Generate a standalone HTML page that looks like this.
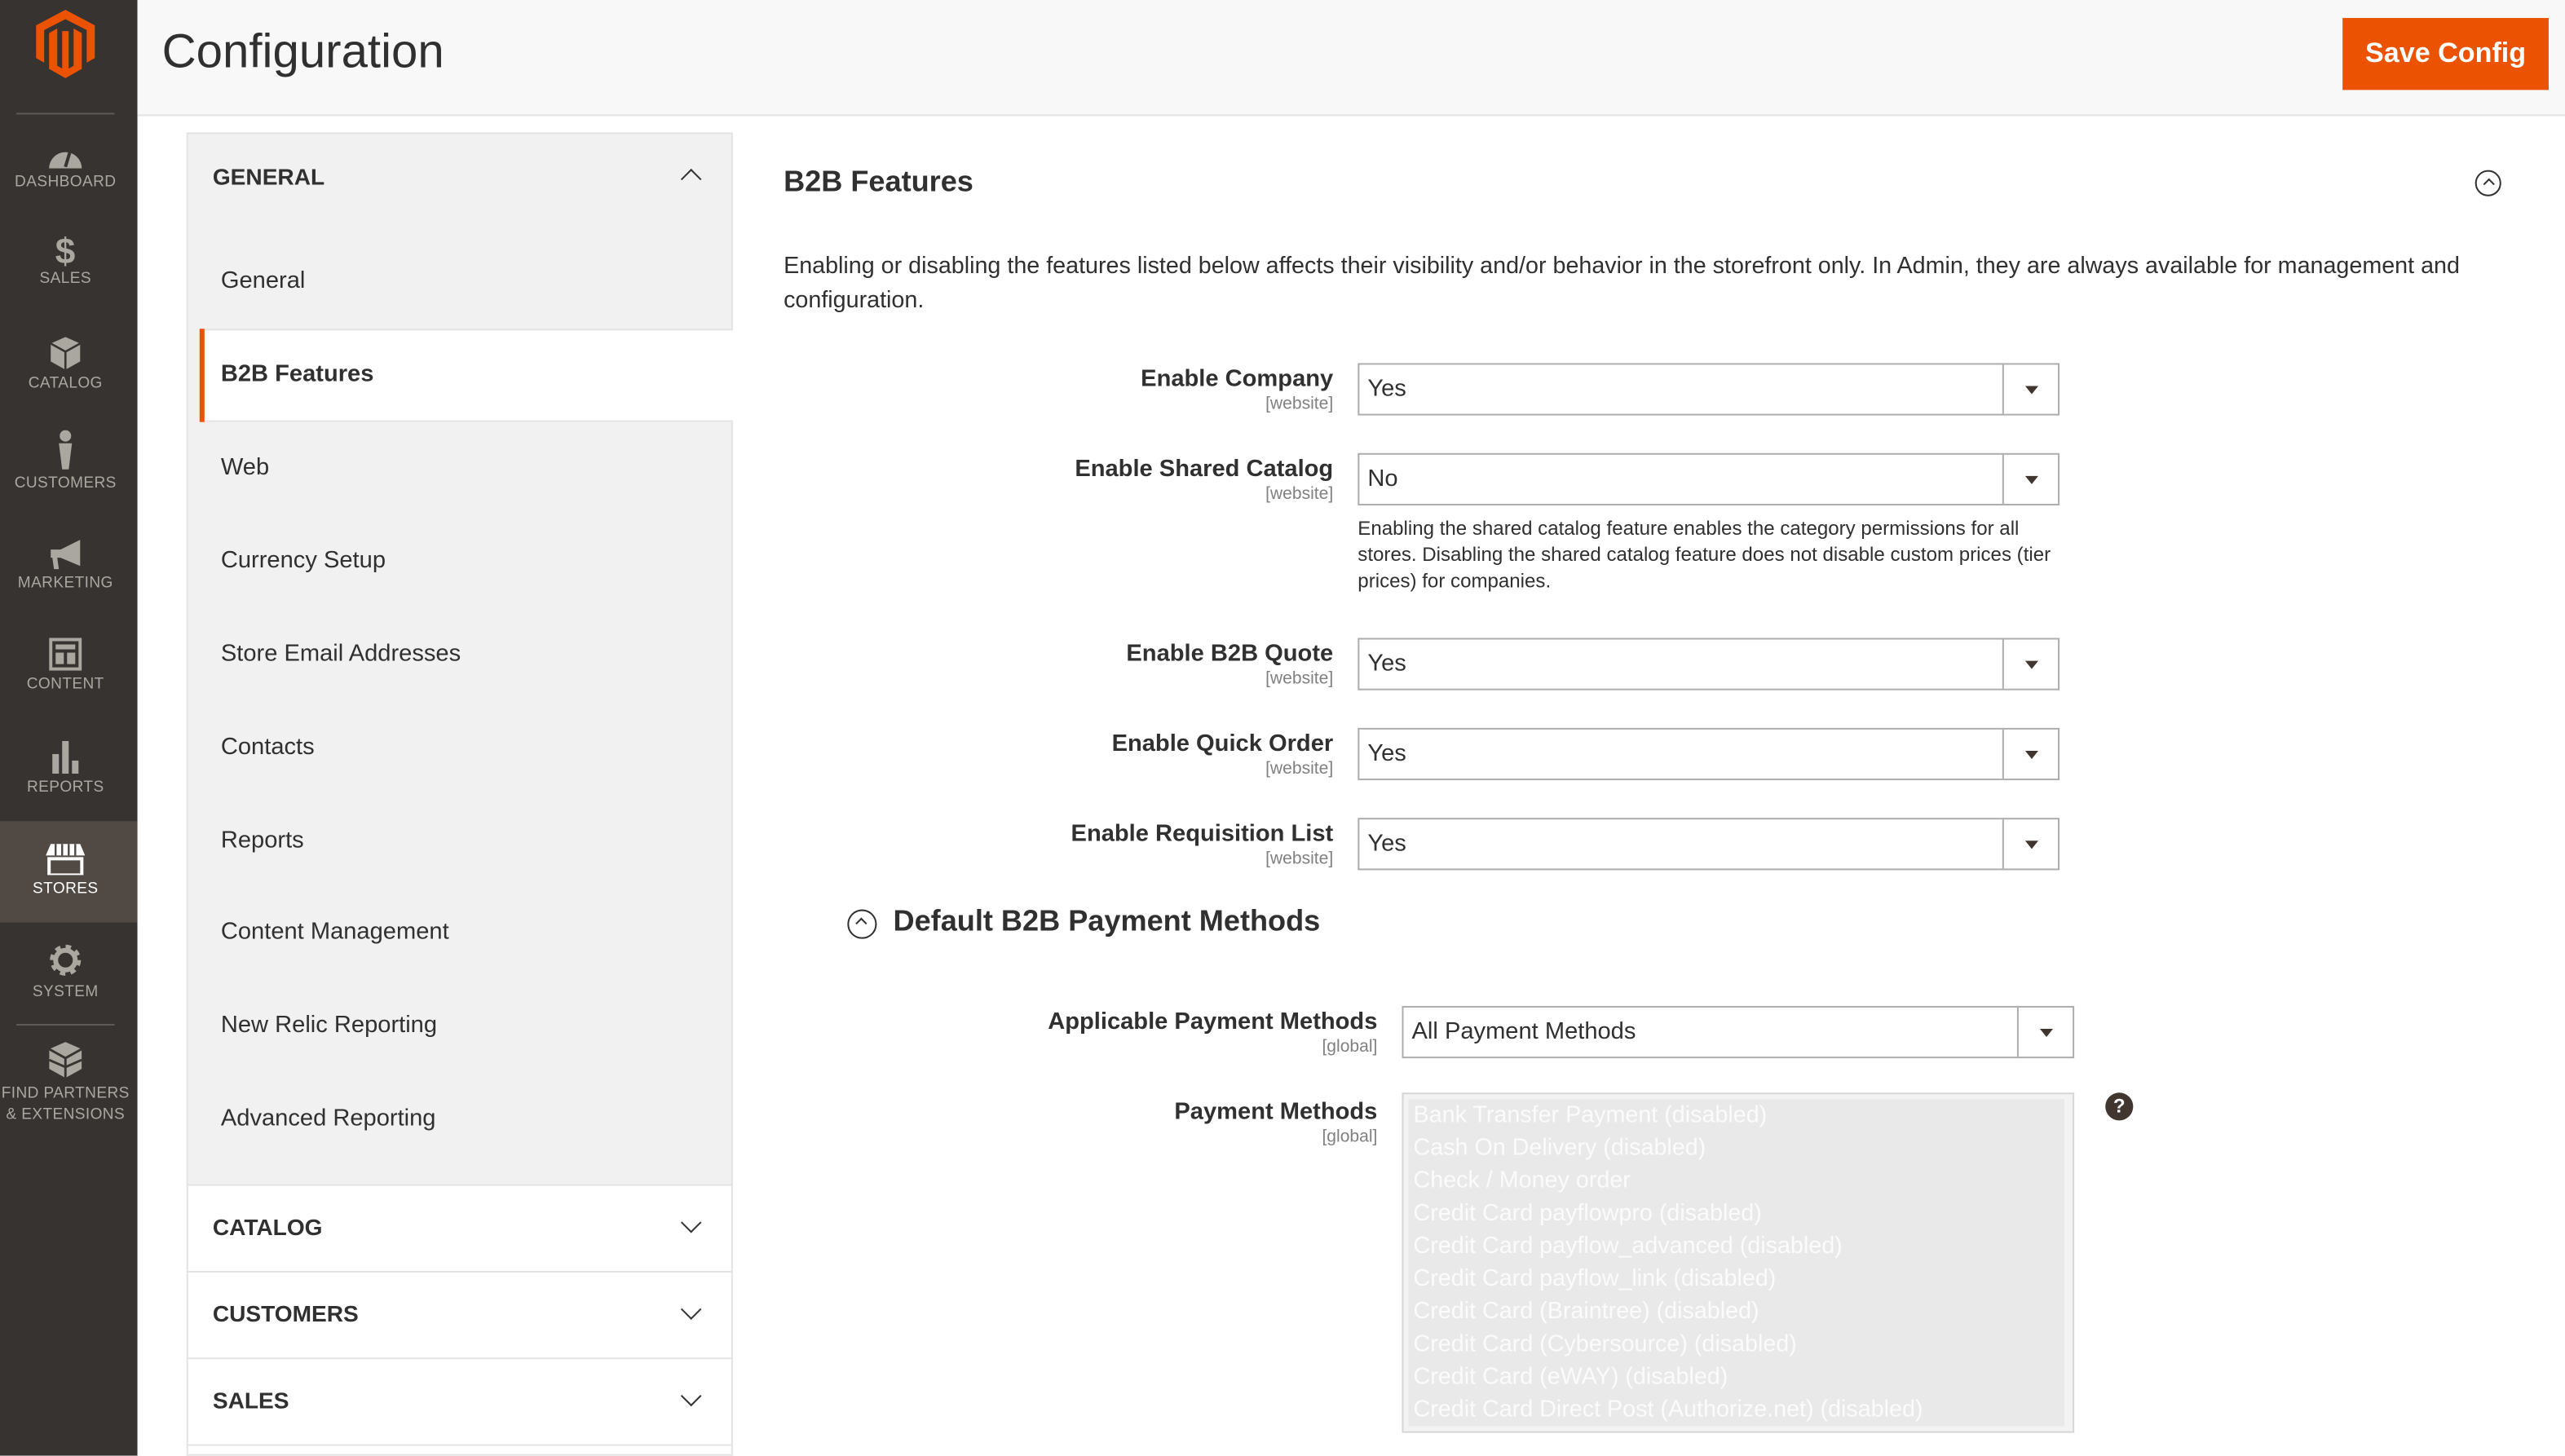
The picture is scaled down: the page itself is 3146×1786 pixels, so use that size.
<!DOCTYPE html>
<html><head><meta charset="utf-8">
<style>
html,body{margin:0;padding:0;background:#fff;overflow:hidden;width:3146px;height:1786px}
#w{position:absolute;left:0;top:0;width:1568px;height:890px;overflow:hidden;transform:scale(2.0064,2.0064);transform-origin:0 0;font-family:"Liberation Sans",sans-serif;color:#303030}
.a{position:absolute}
#side{left:0;top:0;width:84px;height:890px;background:#373330}
.mi{position:absolute;left:0;width:80px;text-align:center;color:#aaa6a0;font-size:9.5px;letter-spacing:.2px}
.mi svg{display:block;margin:0 auto 3px}
#hdr{left:84px;top:0;width:1484px;height:70px;background:#f8f8f8;border-bottom:1px solid #e3e3e3}
.nav{left:114px;width:334px;background:#f1f1f1;border:1px solid #e3e3e3;box-sizing:border-box}
.it{position:absolute;left:135px;font-size:14.5px;color:#303030}
.sec{position:absolute;left:114px;width:334px;height:53px;border:1px solid #e3e3e3;border-top:none;box-sizing:border-box;background:#fff}
.sec b{position:absolute;left:15px;top:17px;font-size:14px}
.chev{position:absolute;right:20px;top:18px;width:8px;height:8px;border-right:1.5px solid #333;border-bottom:1.5px solid #333;transform:rotate(45deg)}
.lab{position:absolute;text-align:right;font-size:14.5px;font-weight:bold;color:#303030}
.lab small{display:block;font-size:10.5px;font-weight:normal;color:#808080;margin-top:1px}
.sel{position:absolute;height:32px;border:1px solid #adadad;box-sizing:border-box;background:#fff;font-size:14.5px;line-height:30px;padding-left:5px;color:#303030}
.sel:after{content:"";position:absolute;right:0;top:0;width:33px;height:30px;border-left:1px solid #adadad}
.sel i{position:absolute;right:12px;top:13px;width:0;height:0;border-left:4.5px solid transparent;border-right:4.5px solid transparent;border-top:5px solid #41362f;z-index:2}
.circ{position:absolute;width:16px;height:16px;border:1.3px solid #303030;border-radius:50%;box-sizing:border-box}
.circ:after{content:"";position:absolute;left:4.5px;top:5px;width:4px;height:4px;border-left:1.3px solid #303030;border-top:1.3px solid #303030;transform:rotate(45deg)}
</style></head><body><div id="w">
<div id="side" class="a">
 <svg class="a" style="left:22px;top:6px" width="36" height="42" viewBox="0 0 36 42"><path d="M18 0 L36 10 V31 L31 34 V13 L18 6 L5 13 V34 L0 31 V10 Z M8 15 L13 12 V36 L18 39 L23 36 V12 L28 15 V38 L18 44 L8 38 Z" fill="#eb5202" transform="scale(1,0.95)"/><path d="M16 13 h4 v25 l-2 1 -2 -1z" fill="#eb5202"/></svg>
 <div class="a" style="left:10px;top:69px;width:60px;height:1px;background:#5f5a55"></div>
 <div class="mi" style="top:86px"><svg width="22" height="17" viewBox="0 0 22 17"><path d="M1 17 A10 10 0 0 1 21 17Z" fill="#aaa6a0"/><path d="M11 16 L14 6" stroke="#373330" stroke-width="2"/></svg>DASHBOARD</div>
 <div class="mi" style="top:143px"><div style="font-size:22px;font-weight:bold;line-height:22px">$</div>SALES</div>
 <div class="mi" style="top:206px"><svg width="20" height="20" viewBox="0 0 20 20"><path d="M10 0 L19 4 V15 L10 20 L1 15 V4Z" fill="#aaa6a0"/><path d="M1 4 L10 9 L19 4 M10 9 V20" stroke="#373330" stroke-width="1.3" fill="none"/></svg>CATALOG</div>
 <div class="mi" style="top:263px"><svg width="10" height="24" viewBox="0 0 10 24"><circle cx="5" cy="3.5" r="3.5" fill="#aaa6a0"/><path d="M1 8 H9 L8 16 L7 24 H3 L2 16Z" fill="#aaa6a0"/></svg>CUSTOMERS</div>
 <div class="mi" style="top:330px"><svg width="22" height="18" viewBox="0 0 22 18"><path d="M2 6 H8 L20 0 V16 L8 11 H6 L7 18 H4 L3 11 H2Z" fill="#aaa6a0"/></svg>MARKETING</div>
 <div class="mi" style="top:390px"><svg width="20" height="20" viewBox="0 0 20 20"><rect x="1" y="1" width="18" height="18" fill="none" stroke="#aaa6a0" stroke-width="2"/><rect x="4" y="4" width="12" height="3" fill="#aaa6a0"/><rect x="4" y="9" width="5" height="7" fill="#aaa6a0"/><rect x="11" y="9" width="5" height="7" fill="#aaa6a0"/></svg>CONTENT</div>
 <div class="mi" style="top:453px"><svg width="20" height="20" viewBox="0 0 20 20"><rect x="2" y="8" width="4" height="12" fill="#aaa6a0"/><rect x="8" y="0" width="4" height="20" fill="#aaa6a0"/><rect x="14" y="12" width="4" height="8" fill="#aaa6a0"/></svg>REPORTS</div>
 <div class="a" style="left:0;top:502px;width:84px;height:62px;background:#514943"></div>
 <div class="mi" style="top:515px;color:#fff"><svg width="24" height="20" viewBox="0 0 24 20"><path d="M3 1 H21 L24 8 H0Z" fill="#fff"/><rect x="2" y="10" width="20" height="10" fill="none" stroke="#fff" stroke-width="2"/><path d="M6 1 V8 M10 1 V8 M14 1 V8 M18 1 V8" stroke="#514943" stroke-width="1.2"/></svg>STORES</div>
 <div class="mi" style="top:576px"><svg width="22" height="22" viewBox="0 0 22 22"><circle cx="11" cy="11" r="7.5" fill="none" stroke="#aaa6a0" stroke-width="4" stroke-dasharray="3 2.9"/><circle cx="11" cy="11" r="6" fill="none" stroke="#aaa6a0" stroke-width="3"/></svg>SYSTEM</div>
 <div class="a" style="left:10px;top:626px;width:60px;height:1px;background:#5f5a55"></div>
 <div class="mi" style="top:637px;line-height:13px"><svg width="22" height="22" viewBox="0 0 20 20"><path d="M10 0 L19 4 V15 L10 20 L1 15 V4Z" fill="#aaa6a0"/><path d="M1 4 L10 9 L19 4 M10 9 V20 M1 10 L10 14 L19 10" stroke="#373330" stroke-width="1.3" fill="none"/></svg>FIND PARTNERS<br>&amp; EXTENSIONS</div>
</div>
<div id="hdr" class="a"><div class="a" style="left:15px;top:16px;font-size:29px;color:#303030">Configuration</div>
 <div class="a" style="left:1348px;top:11px;width:126px;height:44px;background:#eb5202;color:#fff;font-weight:bold;font-size:17px;line-height:44px;text-align:center">Save Config</div></div>

<div class="a nav" style="top:81px;height:53px"><b class="a" style="left:15px;top:18px;font-size:14px">GENERAL</b><div class="a" style="right:20px;top:23px;width:8px;height:8px;border-left:1.5px solid #333;border-top:1.5px solid #333;transform:rotate(45deg)"></div></div>
<div class="a nav" style="top:133px;height:592px;border-top:none"></div>
<div class="a" style="left:122px;top:201px;width:326px;height:57px;background:#fff;border-top:1px solid #e3e3e3;border-bottom:1px solid #e3e3e3;box-sizing:border-box"></div>
<div class="a" style="left:122px;top:201px;width:3px;height:57px;background:#eb5202"></div>
<div class="it" style="top:164px">General</div>
<div class="it" style="top:221px;font-weight:bold">B2B Features</div>
<div class="it" style="top:278px">Web</div>
<div class="it" style="top:335px">Currency Setup</div>
<div class="it" style="top:392px">Store Email Addresses</div>
<div class="it" style="top:449px">Contacts</div>
<div class="it" style="top:506px">Reports</div>
<div class="it" style="top:562px">Content Management</div>
<div class="it" style="top:619px">New Relic Reporting</div>
<div class="it" style="top:676px">Advanced Reporting</div>
<div class="sec" style="top:725px"><b>CATALOG</b><div class="chev"></div></div>
<div class="sec" style="top:778px"><b>CUSTOMERS</b><div class="chev"></div></div>
<div class="sec" style="top:831px"><b>SALES</b><div class="chev"></div></div>
<div class="sec" style="top:884px;height:6px"></div>

<div class="a" style="left:479px;top:101px;font-size:18px;font-weight:bold;color:#303030">B2B Features</div>
<div class="circ" style="left:1513px;top:104px"></div>
<div class="a" style="left:479px;top:153px;width:1075px;font-size:14.3px;line-height:21px;color:#303030">Enabling or disabling the features listed below affects their visibility and/or behavior in the storefront only. In Admin, they are always available for management and configuration.</div>

<div class="lab" style="right:753px;top:224px">Enable Company<small>[website]</small></div>
<div class="sel" style="left:830px;top:222px;width:429px">Yes<i></i></div>
<div class="lab" style="right:753px;top:279px">Enable Shared Catalog<small>[website]</small></div>
<div class="sel" style="left:830px;top:277px;width:429px">No<i></i></div>
<div class="a" style="left:830px;top:315px;width:425px;font-size:12px;line-height:16px;color:#303030">Enabling the shared catalog feature enables the category permissions for all stores. Disabling the shared catalog feature does not disable custom prices (tier prices) for companies.</div>
<div class="lab" style="right:753px;top:392px">Enable B2B Quote<small>[website]</small></div>
<div class="sel" style="left:830px;top:390px;width:429px">Yes<i></i></div>
<div class="lab" style="right:753px;top:447px">Enable Quick Order<small>[website]</small></div>
<div class="sel" style="left:830px;top:445px;width:429px">Yes<i></i></div>
<div class="lab" style="right:753px;top:502px">Enable Requisition List<small>[website]</small></div>
<div class="sel" style="left:830px;top:500px;width:429px">Yes<i></i></div>

<div class="circ" style="left:518px;top:556px;width:18px;height:18px"></div>
<div class="a" style="left:546px;top:553px;font-size:18px;font-weight:bold;color:#303030">Default B2B Payment Methods</div>

<div class="lab" style="right:726px;top:617px">Applicable Payment Methods<small>[global]</small></div>
<div class="sel" style="left:857px;top:615px;width:411px">All Payment Methods<i></i></div>
<div class="lab" style="right:726px;top:672px">Payment Methods<small>[global]</small></div>
<div class="a" style="left:857px;top:668px;width:411px;height:208px;border:1px solid #d6d6d6;background:#f3f3f3;box-sizing:border-box"></div>
<div class="a" style="left:861px;top:672px;width:401px;height:200px;background:#e9e9e9;color:#fbfbfb;font-size:14.3px;line-height:20px;padding-left:3px;box-sizing:border-box">Bank Transfer Payment (disabled)<br>Cash On Delivery (disabled)<br>Check / Money order<br>Credit Card payflowpro (disabled)<br>Credit Card payflow_advanced (disabled)<br>Credit Card payflow_link (disabled)<br>Credit Card (Braintree) (disabled)<br>Credit Card (Cybersource) (disabled)<br>Credit Card (eWAY) (disabled)<br>Credit Card Direct Post (Authorize.net) (disabled)</div>
<div class="a" style="left:1287px;top:668px;width:17px;height:17px;border-radius:50%;background:#41362f;color:#fff;font-size:12px;font-weight:bold;text-align:center;line-height:17px">?</div>
</div></body></html>
